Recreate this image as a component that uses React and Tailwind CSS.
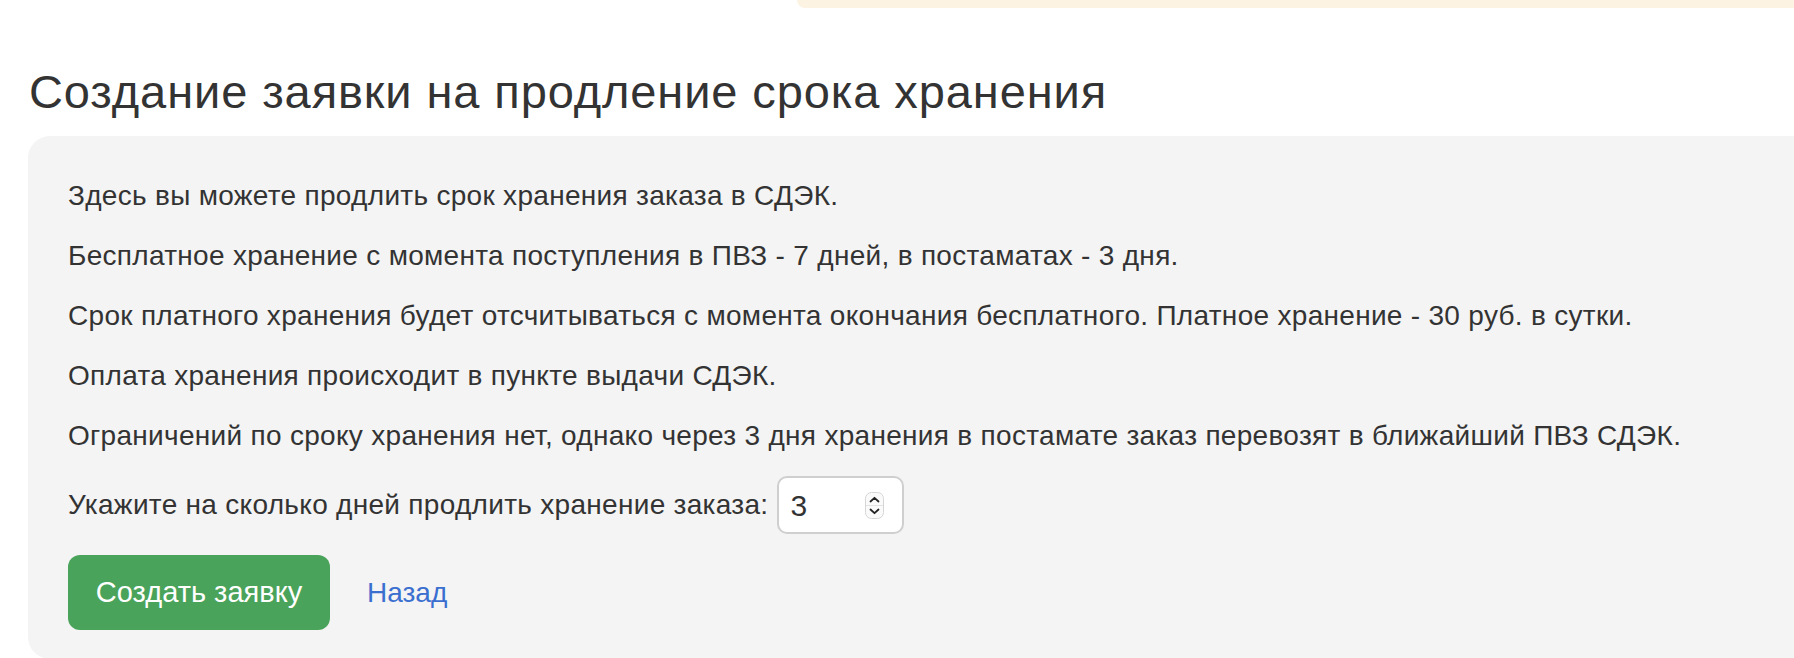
import React from "react";

const paragraphs = [
  "Здесь вы можете продлить срок хранения заказа в СДЭК.",
  "Бесплатное хранение с момента поступления в ПВЗ - 7 дней, в постаматах - 3 дня.",
  "Срок платного хранения будет отсчитываться с момента окончания бесплатного. Платное хранение - 30 руб. в сутки.",
  "Оплата хранения происходит в пункте выдачи СДЭК.",
  "Ограничений по сроку хранения нет, однако через 3 дня хранения в постамате заказ перевозят в ближайший ПВЗ СДЭК.",
];

const Spinner = () => (
  <svg width="19" height="27" viewBox="0 0 19 27" className="shrink-0">
    <rect x="0.5" y="0.5" width="18" height="26" rx="6" fill="#fafafa" stroke="#d6d6d6" />
    <line x1="1" y1="13.5" x2="18" y2="13.5" stroke="#e2e2e2" />
    <path d="M5.5 9.5 L9.5 5.8 L13.5 9.5" fill="none" stroke="#222" strokeWidth="1.8" strokeLinecap="round" strokeLinejoin="round" />
    <path d="M5.5 17.5 L9.5 21.2 L13.5 17.5" fill="none" stroke="#222" strokeWidth="1.8" strokeLinecap="round" strokeLinejoin="round" />
  </svg>
);

const App = () => {
  const [days, setDays] = React.useState("3");

  return (
    <div className="h-[658px] overflow-hidden bg-white text-[#333] font-['Liberation_Sans',Arial,sans-serif]">
      <div className="flex justify-end">
        <div className="h-2 w-[997px] rounded-bl-[24px] bg-[#fdf3e3]" />
      </div>

      <div className="pl-[28px]">
        <h1 className="mt-[59px] ml-[1px] text-[47px] leading-[50px] tracking-[0.9px] font-normal">
          Создание заявки на продление срока хранения
        </h1>

        <div className="mt-[19px] rounded-l-[22px] bg-[#f4f4f4] pl-[40px] pt-[45px] pb-[29px]">
          <div className="flex flex-col gap-[30px] text-[28px] leading-[30px] tracking-[0.3px]">
            {paragraphs.map((text, i) => (
              <p key={i}>{text}</p>
            ))}
          </div>

          <div className="mt-[25px] flex items-center gap-[9px] text-[28px] tracking-[0.3px]">
            <label htmlFor="days">Укажите на сколько дней продлить хранение заказа:</label>
            <div className="flex h-[58px] w-[127px] items-center rounded-[10px] border-2 border-[#cfcfcf] bg-white pl-[11px] pr-[18px]">
              <input
                id="days"
                value={days}
                onChange={(e) => setDays(e.target.value)}
                className="w-full min-w-0 bg-transparent text-[30px] text-[#333] outline-none"
              />
              <Spinner />
            </div>
          </div>

          <div className="mt-[21px] flex items-center gap-[37px]">
            <button className="h-[75px] w-[262px] rounded-[12px] bg-[#4aa35a] text-[29px] text-white">
              Создать заявку
            </button>
            <a href="#" className="text-[28px] text-[#3a6fd0]">
              Назад
            </a>
          </div>
        </div>
      </div>
    </div>
  );
};

export default App;
